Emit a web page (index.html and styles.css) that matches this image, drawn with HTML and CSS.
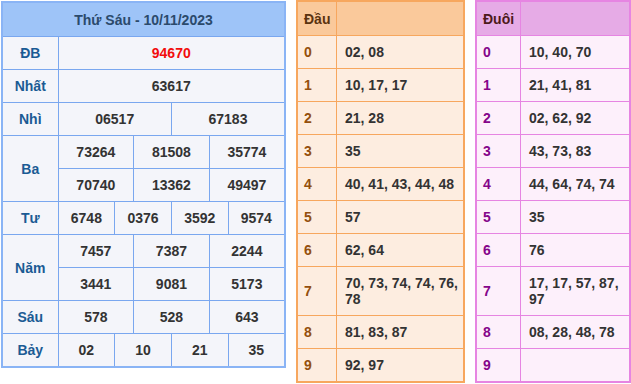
FILE: index.html
```html
<!DOCTYPE html>
<html lang="vi">
<head>
  <meta charset="utf-8">
  <title>Kết quả Thứ Sáu - 10/11/2023</title>
  <link rel="stylesheet" href="styles.css">
</head>
<body>
<div class="board">
  <table class="result">
    <colgroup>
      <col class="col-label">
      <col span="12">
    </colgroup>
    <tr class="head"><th colspan="13">Thứ Sáu - 10/11/2023</th></tr>
    <tr><td class="label">ĐB</td><td colspan="12" class="special">94670</td></tr>
    <tr><td class="label">Nhất</td><td colspan="12">63617</td></tr>
    <tr><td class="label">Nhì</td><td colspan="6">06517</td><td colspan="6">67183</td></tr>
    <tr><td class="label" rowspan="2">Ba</td><td colspan="4">73264</td><td colspan="4">81508</td><td colspan="4">35774</td></tr>
    <tr><td colspan="4">70740</td><td colspan="4">13362</td><td colspan="4">49497</td></tr>
    <tr><td class="label">Tư</td><td colspan="3">6748</td><td colspan="3">0376</td><td colspan="3">3592</td><td colspan="3">9574</td></tr>
    <tr><td class="label" rowspan="2">Năm</td><td colspan="4">7457</td><td colspan="4">7387</td><td colspan="4">2244</td></tr>
    <tr><td colspan="4">3441</td><td colspan="4">9081</td><td colspan="4">5173</td></tr>
    <tr><td class="label">Sáu</td><td colspan="4">578</td><td colspan="4">528</td><td colspan="4">643</td></tr>
    <tr><td class="label">Bảy</td><td colspan="3">02</td><td colspan="3">10</td><td colspan="3">21</td><td colspan="3">35</td></tr>
  </table>

  <table class="loto dau">
    <tr class="head"><th class="key">Đầu</th><th></th></tr>
    <tr><td class="key">0</td><td>02, 08</td></tr>
    <tr><td class="key">1</td><td>10, 17, 17</td></tr>
    <tr><td class="key">2</td><td>21, 28</td></tr>
    <tr><td class="key">3</td><td>35</td></tr>
    <tr><td class="key">4</td><td>40, 41, 43, 44, 48</td></tr>
    <tr><td class="key">5</td><td>57</td></tr>
    <tr><td class="key">6</td><td>62, 64</td></tr>
    <tr class="tall"><td class="key">7</td><td>70, 73, 74, 74, 76, 78</td></tr>
    <tr><td class="key">8</td><td>81, 83, 87</td></tr>
    <tr><td class="key">9</td><td>92, 97</td></tr>
  </table>

  <table class="loto duoi">
    <tr class="head"><th class="key">Đuôi</th><th></th></tr>
    <tr><td class="key">0</td><td>10, 40, 70</td></tr>
    <tr><td class="key">1</td><td>21, 41, 81</td></tr>
    <tr><td class="key">2</td><td>02, 62, 92</td></tr>
    <tr><td class="key">3</td><td>43, 73, 83</td></tr>
    <tr><td class="key">4</td><td>44, 64, 74, 74</td></tr>
    <tr><td class="key">5</td><td>35</td></tr>
    <tr><td class="key">6</td><td>76</td></tr>
    <tr class="tall"><td class="key">7</td><td>17, 17, 57, 87, 97</td></tr>
    <tr><td class="key">8</td><td>08, 28, 48, 78</td></tr>
    <tr><td class="key">9</td><td></td></tr>
  </table>
</div>
</body>
</html>
```

FILE: styles.css
```css
body {
    margin: 0;
    background: #fff;
    color: #333;
    font-family: "Liberation Sans", Arial, sans-serif;
    font-size: 14px;
    font-weight: bold;
}

.board {
    display: flex;
    align-items: flex-start;
    gap: 10px;
    padding: 0 0 0 1px;
}

table {
    border-collapse: collapse;
    table-layout: fixed;
    font: inherit;
}

td, th {
    padding: 0;
    height: 32px;
    line-height: 16px;
    font-weight: bold;
}

/* ket qua */
.result {
    width: 285px;
    margin-top: 1px;
    border: 2px solid #8ab4f5;
    background: #f4f5fa;
}

.result .col-label {
    width: 56px;
}

.result td, .result th {
    border: 1px solid #7aa7ef;
    text-align: center;
}

.result .head th {
    height: 33px;
    background: #9ec4f8;
    color: #2b4a6c;
    border-bottom-color: #7aa7ef;
}

.result .label {
    color: #1b5b94;
}

.result .special {
    color: #f20d0d;
}

/* loto */
.loto {
    border-width: 2px;
    border-style: solid;
}

.loto td, .loto th {
    border-width: 1px;
    border-style: solid;
    text-align: left;
    padding-left: 8px;
    padding-right: 4px;
}

.loto .key {
    padding-left: 6px;
    padding-right: 0;
}

.loto .head th {
    height: 33px;
}

.loto .tall td {
    height: 48px;
}

.dau {
    width: 169px;
    border-color: #f7a75e;
    background: #fdede0;
}

.dau td, .dau th {
    border-color: #f7a75e;
}

.dau .head th {
    background: #fac99b;
    color: #5b3310;
}

.dau td.key {
    width: 32px;
    color: #94500e;
}

.dau th.key {
    width: 32px;
}

.duoi {
    width: 156px;
    border-color: #e685e2;
    background: #fdf0fb;
}

.duoi td, .duoi th {
    border-color: #e685e2;
}

.duoi .head th {
    background: #e6abe6;
    color: #4d1a1a;
}

.duoi td.key, .duoi th.key {
    width: 37px;
}

.duoi td.key {
    color: #85058a;
}
```
